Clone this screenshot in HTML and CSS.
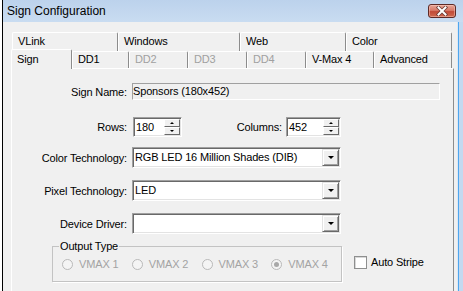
FILE: index.html
```html
<!DOCTYPE html>
<html lang="en">
<head>
  <meta charset="UTF-8">
  <title>Sign Configuration</title>
  <link rel="stylesheet" href="styles.css">
</head>
<body>
  <div class="window">
    <div class="titlebar">
      <span class="title">Sign Configuration</span>
      <div class="close">
        <svg width="12" height="10" viewBox="0 0 12 10">
          <path d="M2.5 1.5 L9.5 8.5 M9.5 1.5 L2.5 8.5" stroke="#6b3b35" stroke-width="3.6" stroke-linecap="square"/>
          <path d="M2.5 1.5 L9.5 8.5 M9.5 1.5 L2.5 8.5" stroke="#fff" stroke-width="2" stroke-linecap="square"/>
        </svg>
      </div>
    </div>
    <div class="frame-body">
      <div class="client">
        <div class="tabs">
          <div class="tab-row back">
            <div class="tab t-vlink">VLink</div>
            <div class="tab t-windows">Windows</div>
            <div class="tab t-web">Web</div>
            <div class="tab t-color">Color</div>
          </div>
          <div class="tab-row front">
            <div class="tab selected t-sign">Sign</div>
            <div class="tab t-dd1">DD1</div>
            <div class="tab disabled t-dd">DD2</div>
            <div class="tab disabled t-dd">DD3</div>
            <div class="tab disabled t-dd">DD4</div>
            <div class="tab t-vmax">V-Max 4</div>
            <div class="tab t-adv">Advanced</div>
          </div>
        </div>

        <div class="panel">
          <div class="row row-name">
            <span class="lbl">Sign Name:</span>
            <div class="readonly">Sponsors (180x452)</div>
          </div>

          <div class="row row-size">
            <span class="lbl">Rows:</span>
            <div class="spin spin-rows">
              <span class="spin-text">180</span>
              <div class="spin-btns"><span class="sb up"></span><span class="sb down"></span></div>
            </div>
            <span class="lbl lbl-cols">Columns:</span>
            <div class="spin spin-cols">
              <span class="spin-text">452</span>
              <div class="spin-btns"><span class="sb up"></span><span class="sb down"></span></div>
            </div>
          </div>

          <div class="row row-color">
            <span class="lbl">Color Technology:</span>
            <div class="combo"><span class="combo-text">RGB LED 16 Million Shades (DIB)</span><span class="combo-btn"></span></div>
          </div>

          <div class="row row-combo">
            <span class="lbl">Pixel Technology:</span>
            <div class="combo"><span class="combo-text">LED</span><span class="combo-btn"></span></div>
          </div>

          <div class="row row-combo">
            <span class="lbl">Device Driver:</span>
            <div class="combo"><span class="combo-text"></span><span class="combo-btn"></span></div>
          </div>

          <div class="output-row">
            <div class="group">
              <span class="legend">Output Type</span>
              <div class="radios">
                <div class="radio-item"><span class="radio"></span>VMAX 1</div>
                <div class="radio-item"><span class="radio"></span>VMAX 2</div>
                <div class="radio-item"><span class="radio"></span>VMAX 3</div>
                <div class="radio-item"><span class="radio on"></span>VMAX 4</div>
              </div>
            </div>
            <div class="check-item"><span class="checkbox"></span>Auto Stripe</div>
          </div>
        </div>
      </div>
      <div class="frame-right"></div>
    </div>
  </div>
</body>
</html>
```

FILE: styles.css
```css
* {
  box-sizing: border-box;
}
body {
  margin: 0;
  width: 463px;
  height: 291px;
  overflow: hidden;
  background: #fff;
  font-family: "Liberation Sans", Arial, sans-serif;
  font-size: 11px;
  letter-spacing: -0.15px;
  color: #000;
}
.window {
  margin-left: 2px;
  height: 291px;
  border-left: 1px solid #000;
  display: flex;
  flex-direction: column;
}

/* title bar */
.titlebar {
  height: 22px;
  flex: none;
  display: flex;
  align-items: flex-start;
  justify-content: space-between;
  padding: 0 7px 0 4px;
  background: linear-gradient(#bcd2ec, #c9dcf1);
}
.title {
  font-size: 12px;
  line-height: 22px;
  letter-spacing: 0;
}
.close {
  margin-top: 4px;
  width: 28px;
  height: 14px;
  border: 1px solid #5e2a26;
  border-radius: 3px;
  background: linear-gradient(#e6a596 0%, #d77a68 45%, #c14a37 55%, #cf6a50 100%);
  box-shadow: inset 0 0 0 1px rgba(255, 210, 200, 0.45);
  display: flex;
  align-items: center;
  justify-content: center;
}

.frame-body {
  flex: 1;
  display: flex;
}
.client {
  flex: 1;
  display: flex;
  flex-direction: column;
  background: #f0f0f0;
  padding: 10px 0 0 8px;
}
.frame-right {
  width: 6px;
  background: linear-gradient(to right, #dce8f5 0 1px, #4ea6ee 1px 2px, #c3d9f0 2px);
}

/* tabs */
.tabs {
  flex: none;
}
.tab-row {
  display: flex;
}
.tab-row.back {
  height: 19px;
  padding-left: 1px;
}
.tab-row.front {
  height: 17px;
}
.tab {
  background: #f0f0f0;
  border-top: 1px solid #fff;
  border-left: 1px solid #fff;
  border-right: 1px solid #8c8c8c;
  border-radius: 2px 2px 0 0;
  padding-left: 5px;
  white-space: nowrap;
}
.back .tab {
  height: 19px;
  line-height: 16px;
}
.front .tab {
  height: 17px;
  line-height: 15px;
}
.front .tab.selected {
  height: 20px;
  margin-top: -2px;
  line-height: 18px;
  position: relative;
  z-index: 1;
}
.tab.disabled {
  color: #a0a0a0;
}
.t-vlink { width: 106px; }
.t-windows { width: 122px; }
.t-web { width: 106px; }
.t-color { width: 106px; }
.t-sign { width: 61px; }
.t-dd1 { width: 57px; }
.t-dd { width: 59px; }
.t-vmax { width: 68px; }
.t-adv { width: 78px; }

/* panel */
.panel {
  flex: 1;
  width: 443px;
  border-top: 1px solid #fff;
  border-left: 1px solid #fff;
  border-right: 1px solid #8c8c8c;
  padding-top: 14px;
}
.row {
  display: flex;
  align-items: center;
}
.lbl {
  flex: none;
  width: 115px;
  margin-right: 5px;
  text-align: right;
}
.readonly {
  width: 308px;
  height: 17px;
  line-height: 15px;
  background: #f0f0f0;
  border-top: 1px solid #a0a0a0;
  border-left: 1px solid #a0a0a0;
  border-bottom: 1px solid #fff;
  border-right: 1px solid #fff;
}

/* spin boxes */
.row-size {
  margin-top: 17px;
}
.spin {
  display: flex;
  height: 20px;
  background: #fff;
  border-top: 1px solid #a0a0a0;
  border-left: 1px solid #a0a0a0;
  border-bottom: 1px solid #fff;
  border-right: 1px solid #fff;
  box-shadow: inset 1px 1px #696969, inset -1px -1px #e3e3e3;
  padding: 1px;
}
.spin-rows {
  width: 49px;
  margin-left: 1px;
}
.spin-cols {
  width: 55px;
}
.lbl-cols {
  width: 100px;
  margin-right: 4px;
}
.spin-text {
  flex: 1;
  padding-left: 1px;
  line-height: 16px;
}
.spin-btns {
  width: 16px;
  display: flex;
  flex-direction: column;
}
.sb {
  flex: 1;
  background: #f0f0f0;
  border-top: 1px solid #fff;
  border-left: 1px solid #fff;
  border-bottom: 1px solid #696969;
  border-right: 1px solid #696969;
  display: flex;
  align-items: center;
  justify-content: center;
}
.sb.up::after {
  content: "";
  border-left: 2px solid transparent;
  border-right: 2px solid transparent;
  border-bottom: 2px solid #000;
}
.sb.down::after {
  content: "";
  border-left: 2px solid transparent;
  border-right: 2px solid transparent;
  border-top: 2px solid #000;
}

/* combo boxes */
.row-color {
  margin-top: 10px;
}
.row-combo {
  margin-top: 12px;
}
.combo {
  display: flex;
  width: 209px;
  height: 21px;
  background: #fff;
  border-top: 1px solid #a0a0a0;
  border-left: 1px solid #a0a0a0;
  border-bottom: 1px solid #fff;
  border-right: 1px solid #fff;
  box-shadow: inset 1px 1px #696969, inset -1px -1px #e3e3e3;
  padding: 1px;
}
.combo-text {
  flex: 1;
  padding-left: 1px;
  line-height: 17px;
  white-space: nowrap;
}
.combo-btn {
  width: 17px;
  background: #f0f0f0;
  border-top: 1px solid #e3e3e3;
  border-left: 1px solid #e3e3e3;
  border-bottom: 1px solid #696969;
  border-right: 1px solid #696969;
  box-shadow: inset 1px 1px #fff, inset -1px -1px #a0a0a0;
  display: flex;
  align-items: center;
  justify-content: center;
}
.combo-btn::after {
  content: "";
  border-left: 3px solid transparent;
  border-right: 3px solid transparent;
  border-top: 3px solid #000;
}

/* output type */
.output-row {
  display: flex;
  align-items: flex-start;
  margin-top: 12px;
}
.group {
  margin-left: 40px;
  width: 290px;
  height: 36px;
  border: 1px solid #c3c3c3;
  box-shadow: 1px 1px #fff;
}
.legend {
  display: block;
  width: fit-content;
  margin: -7px 0 0 6px;
  padding: 0 1px;
  line-height: 13px;
  background: #f0f0f0;
}
.radios {
  display: flex;
  margin-top: 5px;
  padding-left: 9px;
  color: #a3a3a3;
}
.radio-item {
  width: 71px;
  display: flex;
  align-items: center;
  line-height: 13px;
}
.radio {
  width: 11px;
  height: 11px;
  margin-right: 6px;
  border: 1px solid #b9b9b9;
  border-radius: 50%;
  background: #f4f4f4;
  display: flex;
  align-items: center;
  justify-content: center;
}
.radio.on::after {
  content: "";
  width: 5px;
  height: 5px;
  border-radius: 50%;
  background: #a8a8a8;
}
.check-item {
  display: flex;
  align-items: center;
  margin: 10px 0 0 12px;
  line-height: 13px;
}
.checkbox {
  width: 13px;
  height: 13px;
  margin-right: 4px;
  border: 1px solid #8e8f8f;
  background: #fff;
  box-shadow: inset 1px 1px #d8d8d8;
}
```
